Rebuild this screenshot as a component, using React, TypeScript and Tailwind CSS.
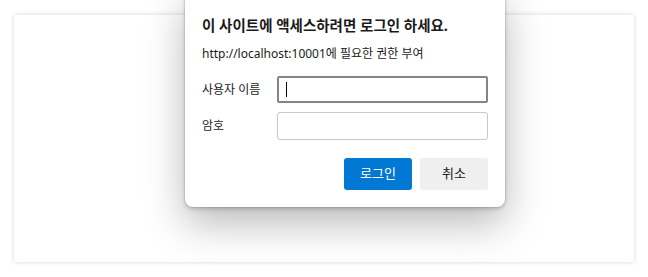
export default function App() {
  const font = { fontFamily: '"Segoe UI", "Noto Sans", "Noto Sans CJK KR", sans-serif' };
  return (
    <div className="w-[648px] h-[277px] bg-white pt-[15px] pl-[14px] overflow-hidden" style={font}>
      <div className="w-[620px] h-[247px] bg-white shadow-[0_0_4px_rgba(0,0,0,0.18)] flex items-start">
        <div className="ml-[171px] mt-[-25px] w-[320px] h-[217px] bg-white rounded-b-[8px] pt-[25px] px-[17px] pb-[16px] flex flex-col shadow-[0_0_0_1px_rgba(0,0,0,0.06),0_2px_4px_rgba(0,0,0,0.2),0_16px_40px_rgba(0,0,0,0.28)]">
          <div className="text-[14.5px] leading-[20px] font-bold text-[#1a1a1a] whitespace-nowrap">
            이 사이트에 액세스하려면 로그인 하세요.
          </div>
          <div className="mt-[11px] text-[12px] leading-[16px] text-[#1a1a1a] whitespace-nowrap">
            http://localhost:10001에 필요한 권한 부여
          </div>
          <div className="mt-[14px] flex items-center">
            <div className="w-[75px] text-[12px] text-[#1a1a1a] whitespace-nowrap">사용자 이름</div>
            <div className="w-[211px] h-[27px] border-2 border-[#858585] rounded-[2px] flex items-center pl-[7px]">
              <div className="w-px h-[15px] bg-black" />
            </div>
          </div>
          <div className="mt-[9px] flex items-center">
            <div className="w-[75px] text-[12px] text-[#1a1a1a] whitespace-nowrap">암호</div>
            <div className="w-[211px] h-[28px] border border-[#c8c8c8] rounded-[3px]" />
          </div>
          <div className="mt-[18px] flex justify-end gap-[8px]">
            <div className="w-[68px] h-[32px] bg-[#0078d4] rounded-[3px] flex items-center justify-center text-white text-[13px]">로그인</div>
            <div className="w-[68px] h-[32px] bg-[#efefef] rounded-[3px] flex items-center justify-center text-[#1a1a1a] text-[13px]">취소</div>
          </div>
        </div>
      </div>
    </div>
  );
}
